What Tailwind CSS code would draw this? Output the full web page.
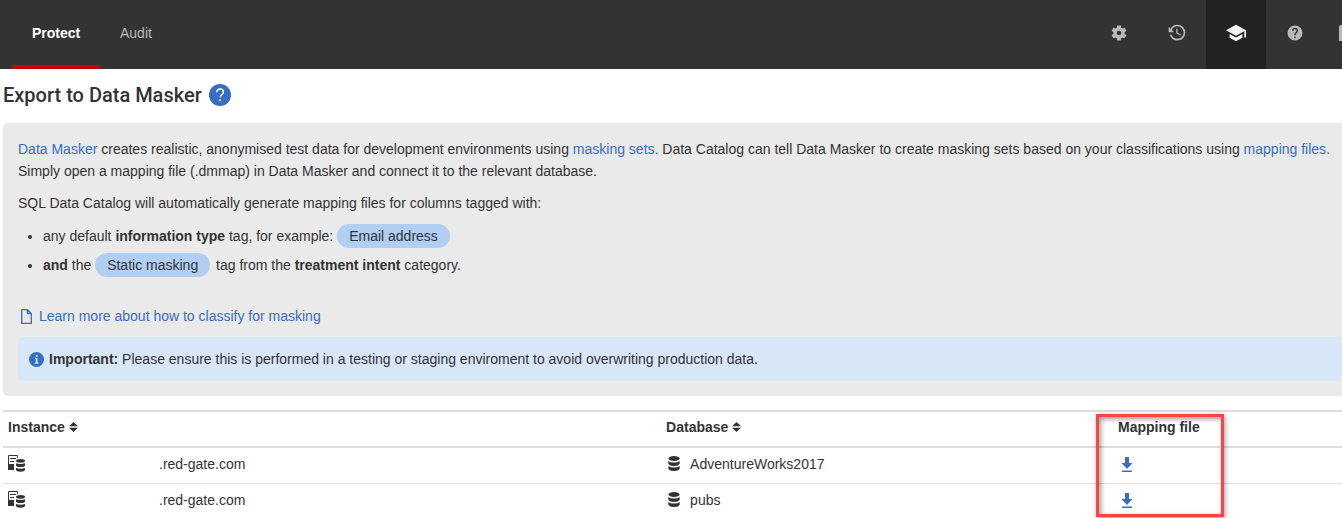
<!DOCTYPE html>
<html lang="en">
<head>
    <meta charset="UTF-8">
    <meta name="viewport" content="width=device-width, initial-scale=1.0">
    <title>Export to Data Masker</title>
    <script src="https://cdn.jsdelivr.net/npm/@tailwindcss/browser@4"></script>
</head>
<body class="bg-white text-[#333] text-sm/[22px] font-['Liberation_Sans',Arial,sans-serif] overflow-hidden">
    <!-- Shared icons -->
    <svg class="hidden">
        <symbol id="db" viewBox="0 0 12 15">
            <ellipse cx="6" cy="2.500" rx="5.500" ry="2.500"/>
            <path d="M.3 5Q2 6.500 6 6.500T11.700 5V7.500Q10.800 10 6 10T.3 7.500z"/>
            <path d="M.3 10Q2 11.500 6 11.500T11.700 10V12.500Q10.800 15 6 15T.3 12.500z"/>
        </symbol>
        <symbol id="server" viewBox="0 0 18 17">
            <path fill="none" stroke="currentColor" d="M.5 10V.5h9V3M2 3.500h6M2 6.500h4"/>
            <path d="M0 9h6v6H0z"/>
            <ellipse cx="12.500" cy="5.800" rx="4.500" ry="1.900"/>
            <path d="M8 8.300q4.500 1.600 9 0v2.200q-.7 1.500-4.500 1.500T8 10.500zM8 13q4.500 1.600 9 0v2q-.7 1.700-4.500 1.700T8 15z"/>
        </symbol>
        <symbol id="sort" viewBox="0 0 9 10">
            <path d="M4.500 0L9 4.300H0zM4.500 10L9 5.700H0z"/>
        </symbol>
        <symbol id="download" viewBox="0 0 12 16">
            <path d="M4 0h4v6h3.500L6 12 .5 6H4zM1 13.500h10V15H1z"/>
        </symbol>
    </svg>

    <header class="flex h-[69px] justify-between overflow-hidden bg-[#333] text-[#b9b9b9]">
        <nav class="flex pl-3">
            <a href="#" class="flex w-[88px] items-center justify-center border-b-4 border-[#c00] pt-px font-bold text-white">Protect</a>
            <a href="#" class="flex items-center border-b-4 border-transparent px-5 pt-px">Audit</a>
        </nav>
        <div class="-mr-[30px] flex shrink-0">
            <button type="button" aria-label="Settings" class="flex w-[58px] items-center justify-center pb-[3px]">
                <svg class="size-[18px]" viewBox="0 0 24 24" fill="currentColor"><path d="M19.430 12.980c.04-.32.07-.64.07-.98s-.03-.66-.07-.98l2.110-1.650c.19-.15.24-.42.12-.64l-2-3.460c-.12-.22-.39-.3-.61-.22l-2.490 1c-.52-.4-1.080-.73-1.690-.98l-.38-2.650C14.460 2.180 14.250 2 14 2h-4c-.25 0-.46.18-.49.42l-.38 2.650c-.61.25-1.170.59-1.690.98l-2.490-1c-.23-.09-.49 0-.61.22l-2 3.460c-.13.22-.07.49.12.64l2.110 1.650c-.04.32-.07.65-.07.98s.03.66.07.98l-2.110 1.650c-.19.15-.24.42-.12.64l2 3.460c.12.22.39.3.61.22l2.490-1c.52.4 1.080.73 1.690.98l.38 2.650c.03.24.24.42.49.42h4c.25 0 .46-.18.49-.42l.38-2.650c.61-.25 1.170-.59 1.690-.98l2.490 1c.23.09.49 0 .61-.22l2-3.460c.12-.22.07-.49-.12-.64zM12 15a3 3 0 110-6 3 3 0 010 6z"/></svg>
            </button>
            <button type="button" aria-label="History" class="flex w-[58px] items-center justify-center pb-[3px]">
                <svg class="size-5" viewBox="0 0 24 24" fill="currentColor"><path d="M11 7v5.110l4.710 2.790.79-1.280-4-2.370V7zM12.500 2C8.970 2 5.910 3.920 4.270 6.770L2 4.500V11h6.500L5.750 8.250C6.960 5.730 9.500 4 12.500 4a7.500 7.500 0 010 15c-3.270 0-6.030-2.090-7.060-5h-2.100c1.100 4.030 4.770 7 9.160 7a9.500 9.500 0 000-19z"/></svg>
            </button>
            <button type="button" aria-label="Learning" class="flex w-[60px] items-center justify-center bg-[#222] pb-[3px] text-[#f2f2f2]">
                <svg class="size-[22px]" viewBox="0 0 24 24" fill="currentColor"><path d="M5 13.180v4L12 21l7-3.820v-4L12 17zM12 3L1 9l11 6 9-4.910V17h2V9z"/></svg>
            </button>
            <button type="button" aria-label="Help" class="flex w-[58px] items-center justify-center pb-[3px]">
                <svg class="size-[18px]" viewBox="0 0 24 24" fill="currentColor"><path d="M12 2a10 10 0 100 20 10 10 0 000-20zm1 17h-2v-2h2zm2.070-7.750l-.9.920C13.450 12.900 13 13.500 13 15h-2v-.5c0-1.100.45-2.100 1.170-2.830l1.240-1.260c.37-.36.59-.86.59-1.410a2 2 0 10-4 0H8a4 4 0 118 0c0 .88-.36 1.680-.93 2.250z"/></svg>
            </button>
            <button type="button" aria-label="Account" class="flex w-12 items-center justify-center pb-[3px]">
                <svg class="size-[18px]" viewBox="0 0 18 18" fill="currentColor"><path d="M2 1h14q2 0 2 2v14H0V3q0-2 2-2z"/></svg>
            </button>
        </div>
    </header>

    <main class="pl-[3px]">
        <div class="flex h-[54px] items-center gap-[7px] pb-[2px]">
            <h1 class="font-[Roboto,sans-serif] text-xl font-medium">Export to Data Masker</h1>
            <a href="#" aria-label="Help with exporting">
                <svg class="size-[22px]" viewBox="0 0 22 22"><circle cx="11" cy="11" r="11" fill="#366ec6"/><path d="M7.700 8.200Q7.900 5 11.100 5t3.300 2.900c0 2.400-3.200 2.700-3.200 5.400" fill="none" stroke="#fff" stroke-width="1.400"/><circle cx="11.200" cy="16.300" r="1" fill="#fff"/></svg>
            </a>
        </div>

        <section class="rounded-l-[5px] bg-[#eaeaea] py-[15px] pl-[15px]">
            <p class="mb-[10px] whitespace-nowrap">
                <a href="#" class="text-[#366ec6]">Data Masker</a> creates realistic, anonymised test data for development environments using <a href="#" class="text-[#366ec6]">masking sets.</a> Data Catalog can tell Data Masker to create masking sets based on your classifications using <a href="#" class="text-[#366ec6]">mapping files.</a><br>
                Simply open a mapping file (.dmmap) in Data Masker and connect it to the relevant database.
            </p>
            <p class="mb-2">SQL Data Catalog will automatically generate mapping files for columns tagged with:</p>
            <ul class="mb-[25px] list-disc pl-[25px] leading-[29px]">
                <li>any default <b>information type</b> tag, for example: <span class="inline-block rounded-full bg-[#b1cff2] px-3 leading-6">Email address</span></li>
                <li><b>and</b> the <span class="mr-[2px] inline-block rounded-full bg-[#b1cff2] px-3 leading-6">Static masking</span> tag from the <b>treatment intent</b> category.</li>
            </ul>
            <a href="#" class="mb-[10px] flex items-center gap-[7px] pl-[3px] text-[#366ec6]">
                <svg class="h-[15px] w-[11px]" viewBox="0 0 11 15" fill="none" stroke="currentColor" stroke-width="1.300"><path d="M.7.7h5.800l3.800 3.800v9.800H.7zM6.500.7v3.800h3.800"/></svg>
                Learn more about how to classify for masking
            </a>
            <div class="flex h-11 items-center gap-[5px] rounded-l-[5px] bg-[#d8e7f8] pl-[11px]">
                <svg class="size-[15px]" viewBox="0 0 15 15"><circle cx="7.500" cy="7.500" r="7.500" fill="#366ec6"/><path d="M6.700 3h1.800v1.700H6.700zM6 6h2.500v4.500h1v1.200H5.800v-1.200h1V7.100H6z" fill="#d8e7f8"/></svg>
                <p><b>Important:</b> Please ensure this is performed in a testing or staging enviroment to avoid overwriting production data.</p>
            </div>
        </section>

        <table class="mt-[14px] w-full table-fixed border-separate border-spacing-0 text-left">
            <thead>
                <tr class="h-[38px]">
                    <th class="w-[49.15%] border-y-2 border-[#ddd] pb-1 pl-[5px]">Instance <svg class="inline-block h-[10px] w-[9px] align-baseline" fill="currentColor"><use href="#sort"/></svg></th>
                    <th class="w-[33.75%] border-y-2 border-[#ddd] pb-1 pl-[5px]">Database <svg class="inline-block h-[10px] w-[9px] align-baseline" fill="currentColor"><use href="#sort"/></svg></th>
                    <th class="relative border-y-2 border-[#ddd] pb-1 pl-[5px]">
                        Mapping file
                        <!-- Highlight around the column -->
                        <div class="pointer-events-none absolute top-[2px] -left-[17px] h-[103px] w-[128px] border-3 border-[#fd4343] shadow-[1px_2px_5px_rgba(0,0,0,0.4),inset_2px_2px_5px_rgba(0,0,0,0.4)]"></div>
                    </th>
                </tr>
            </thead>
            <tbody>
                <tr class="h-9">
                    <td class="border-b border-[#ddd] pb-1 pl-[5px]">
                        <div class="flex items-center"><svg class="mr-[133px] h-[17px] w-[18px]" fill="currentColor"><use href="#server"/></svg>.red-gate.com</div>
                    </td>
                    <td class="border-b border-[#ddd] pb-1 pl-[7px]">
                        <div class="flex items-center gap-[10px]"><svg class="h-[15px] w-3" fill="currentColor"><use href="#db"/></svg>AdventureWorks2017</div>
                    </td>
                    <td class="border-b border-[#ddd] pb-1 pl-2">
                        <a href="#" aria-label="Download AdventureWorks2017 mapping file" class="inline-block align-middle text-[#366ec6]"><svg class="h-4 w-3" fill="currentColor"><use href="#download"/></svg></a>
                    </td>
                </tr>
                <tr class="h-9">
                    <td class="border-b border-[#ddd] pb-1 pl-[5px]">
                        <div class="flex items-center"><svg class="mr-[133px] h-[17px] w-[18px]" fill="currentColor"><use href="#server"/></svg>.red-gate.com</div>
                    </td>
                    <td class="border-b border-[#ddd] pb-1 pl-[7px]">
                        <div class="flex items-center gap-[10px]"><svg class="h-[15px] w-3" fill="currentColor"><use href="#db"/></svg>pubs</div>
                    </td>
                    <td class="border-b border-[#ddd] pb-1 pl-2">
                        <a href="#" aria-label="Download pubs mapping file" class="inline-block align-middle text-[#366ec6]"><svg class="h-4 w-3" fill="currentColor"><use href="#download"/></svg></a>
                    </td>
                </tr>
            </tbody>
        </table>
    </main>
</body>
</html>
